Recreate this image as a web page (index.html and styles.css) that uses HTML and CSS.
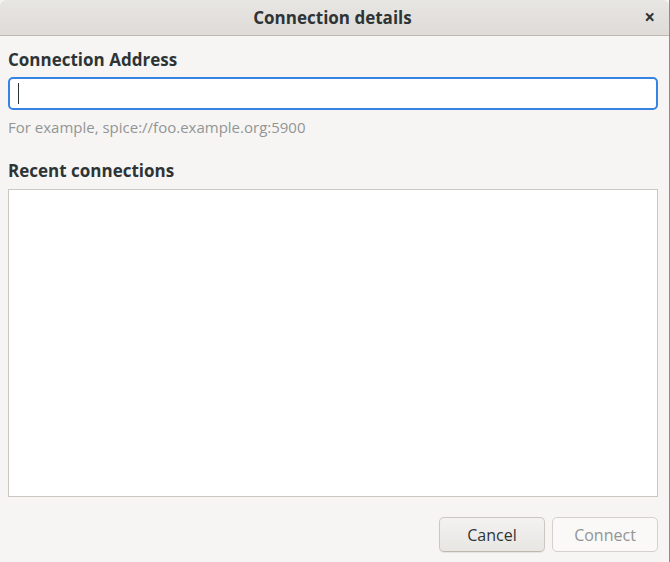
FILE: index.html
```html
<!DOCTYPE html>
<html>
  <head>
    <meta charset="utf-8">
    <title>Connection details</title>
    <link rel="stylesheet" href="styles.css">
  </head>
  <body>
    <div id="dialog">
      <div id="titlebar">
        <span class="title">Connection details</span>
        <span class="close">&#215;</span>
      </div>

      <div id="content">
        <div class="label">Connection Address</div>
        <div id="address"><span class="caret"></span></div>
        <div class="hint">For example, spice://foo.example.org:5900</div>

        <div class="label recent">Recent connections</div>
        <div id="list"></div>

        <div id="actions">
          <button type="button" class="btn">Cancel</button>
          <button type="button" class="btn" disabled>Connect</button>
        </div>
      </div>
    </div>
  </body>
</html>
```

FILE: styles.css
```css
html, body{
  margin: 0;
  padding: 0;
  background: #f6f5f4;
}

#dialog{
  width: 669px;
  height: 562px;
  border-right: 1px solid #8b8e8f;
  background: #f6f5f4;
  font-family: "Open Sans", sans-serif;
  color: #2e3436;
  display: flex;
  flex-direction: column;
}

#titlebar{
  height: 35px;
  border-bottom: 1px solid #bfb8b1;
  border-radius: 6px 6px 0 0;
  background: linear-gradient(#e8e6e3, #dedbd8);
  display: flex;
  align-items: center;
  justify-content: center;
  position: relative;
}

.title{
  font-weight: bold;
  font-size: 17px;
  margin-left: -4px;
}

.close{
  position: absolute;
  right: 14px;
  top: 7px;
  font-size: 19px;
  font-weight: bold;
  line-height: 20px;
}

#content{
  padding: 0 11px 0 8px;
  display: flex;
  flex-direction: column;
  flex: 1;
}

.label{
  font-weight: bold;
  font-size: 17px;
  height: 22px;
  line-height: 22px;
  margin-top: 13px;
}

#address{
  margin-top: 6px;
  height: 29px;
  border: 2px solid #3584e4;
  border-radius: 5px;
  background: #fff;
  display: flex;
  align-items: center;
  padding-left: 8px;
}

.caret{
  width: 1px;
  height: 21px;
  background: #2e3436;
}

.hint{
  font-size: 15px;
  color: #929595;
  margin-top: 8px;
  height: 19px;
  line-height: 19px;
}

.recent{
  margin-top: 23px;
}

#list{
  margin-top: 7px;
  height: 306px;
  border: 1px solid #cdc7c2;
  background: #fff;
}

#actions{
  margin-top: 20px;
  display: flex;
  justify-content: flex-end;
  gap: 7px;
}

.btn{
  width: 106px;
  height: 35px;
  font-family: "Open Sans", sans-serif;
  font-size: 16px;
  color: #2e3436;
  border: 1px solid #cdc7c2;
  border-bottom-color: #bfb8b1;
  border-radius: 5px;
  background: linear-gradient(#f4f2f1, #e8e6e3);
  box-shadow: 0 1px 1px rgba(0,0,0,0.07);
  padding: 0;
}

.btn:disabled{
  color: #929595;
  background: #faf9f8;
  border-color: #d5d0cc;
  box-shadow: none;
}
```
